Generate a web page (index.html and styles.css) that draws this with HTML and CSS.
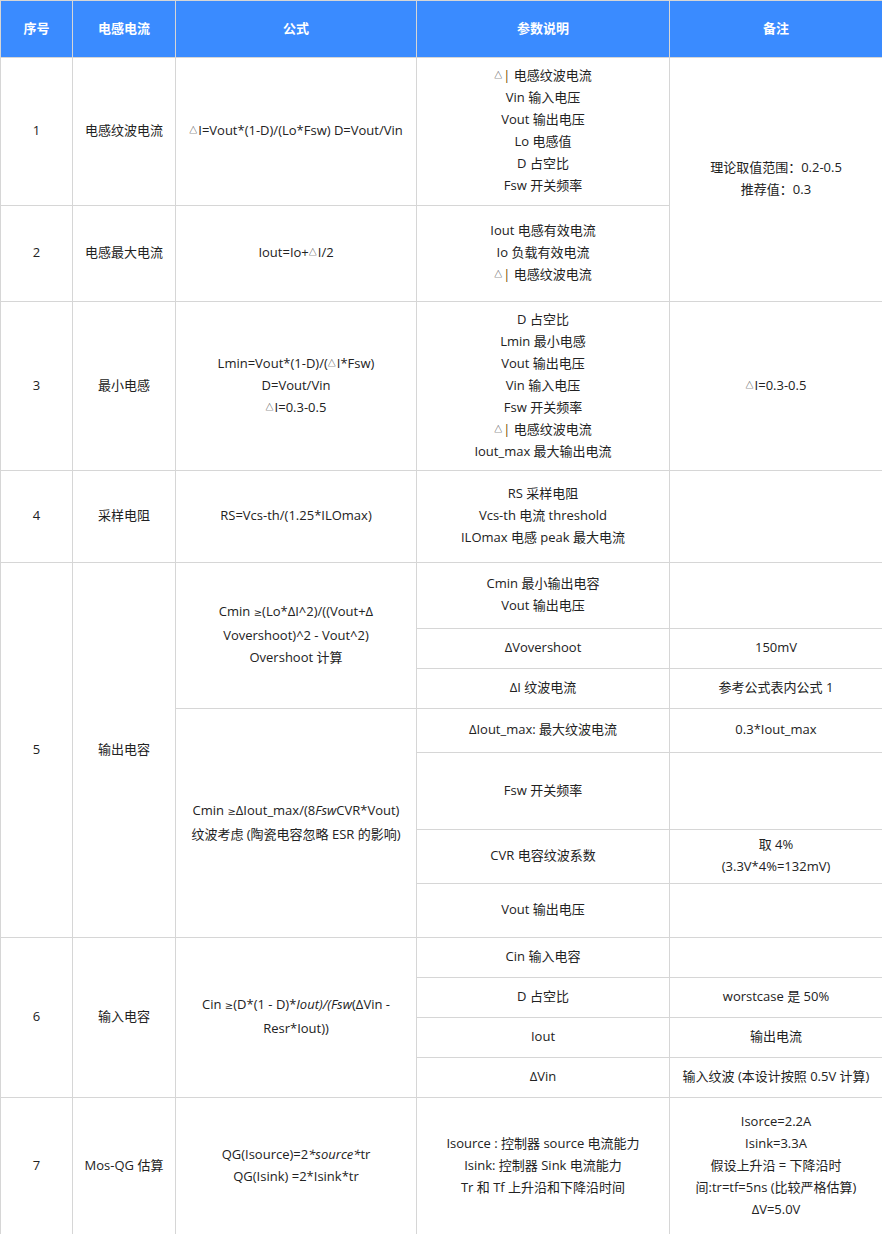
FILE: index.html
```html
<!DOCTYPE html>
<html lang="zh-CN">
<head>
<meta charset="utf-8">
<title>电感电容计算表</title>
<link rel="stylesheet" href="styles.css">
</head>
<body>
<table class="sheet">
  <colgroup>
    <col class="c1"><col class="c2"><col class="c3"><col class="c4"><col class="c5">
  </colgroup>
  <thead>
    <tr class="h-head">
      <th>序号</th><th>电感电流</th><th>公式</th><th>参数说明</th><th>备注</th>
    </tr>
  </thead>
  <tbody>
    <tr class="h148">
      <td>1</td>
      <td>电感纹波电流</td>
      <td><span class="tri">△</span>I=Vout*(1-D)/(Lo*Fsw) D=Vout/Vin</td>
      <td><span class="tri">△</span><span class="bar">|</span> 电感纹波电流<br>Vin 输入电压<br>Vout 输出电压<br>Lo 电感值<br>D 占空比<br>Fsw 开关频率</td>
      <td rowspan="2">理论取值范围：0.2-0.5<br>推荐值：0.3</td>
    </tr>
    <tr class="h96">
      <td>2</td>
      <td>电感最大电流</td>
      <td>Iout=Io+<span class="tri">△</span>I/2</td>
      <td>Iout 电感有效电流<br>Io 负载有效电流<br><span class="tri">△</span><span class="bar">|</span> 电感纹波电流</td>
    </tr>
    <tr class="h169">
      <td>3</td>
      <td>最小电感</td>
      <td>Lmin=Vout*(1-D)/(<span class="tri">△</span>I*Fsw)<br>D=Vout/Vin<br><span class="tri">△</span>I=0.3-0.5</td>
      <td>D 占空比<br>Lmin 最小电感<br>Vout 输出电压<br>Vin 输入电压<br>Fsw 开关频率<br><span class="tri">△</span><span class="bar">|</span> 电感纹波电流<br>Iout_max 最大输出电流</td>
      <td><span class="tri">△</span>I=0.3-0.5</td>
    </tr>
    <tr class="h92">
      <td>4</td>
      <td>采样电阻</td>
      <td>RS=Vcs-th/(1.25*ILOmax)</td>
      <td>RS 采样电阻<br>Vcs-th 电流 threshold<br>ILOmax 电感 peak 最大电流</td>
      <td></td>
    </tr>
    <tr class="h66">
      <td rowspan="7">5</td>
      <td rowspan="7">输出电容</td>
      <td rowspan="3">Cmin <span class="ge">≥</span>(Lo*ΔI^2)/((Vout+Δ<br>Vovershoot)^2 - Vout^2)<br>Overshoot 计算</td>
      <td>Cmin 最小输出电容<br>Vout 输出电压</td>
      <td></td>
    </tr>
    <tr class="h40">
      <td>ΔVovershoot</td>
      <td>150mV</td>
    </tr>
    <tr class="h40">
      <td>ΔI 纹波电流</td>
      <td>参考公式表内公式 1</td>
    </tr>
    <tr class="h44">
      <td rowspan="4">Cmin <span class="ge">≥</span>ΔIout_max/(8<i>Fsw</i>CVR*Vout)<br>纹波考虑 (陶瓷电容忽略 ESR 的影响)</td>
      <td>ΔIout_max: 最大纹波电流</td>
      <td>0.3*Iout_max</td>
    </tr>
    <tr class="h77">
      <td>Fsw 开关频率</td>
      <td></td>
    </tr>
    <tr class="h54">
      <td>CVR 电容纹波系数</td>
      <td>取 4%<br>(3.3V*4%=132mV)</td>
    </tr>
    <tr class="h54">
      <td>Vout 输出电压</td>
      <td></td>
    </tr>
    <tr class="h40">
      <td rowspan="4">6</td>
      <td rowspan="4">输入电容</td>
      <td rowspan="4">Cin <span class="ge">≥</span>(D*(1 - D)*<i>Iout)/(Fsw</i>(ΔVin -<br>Resr*Iout))</td>
      <td>Cin 输入电容</td>
      <td></td>
    </tr>
    <tr class="h40">
      <td>D 占空比</td>
      <td>worstcase 是 50%</td>
    </tr>
    <tr class="h40">
      <td>Iout</td>
      <td>输出电流</td>
    </tr>
    <tr class="h40">
      <td>ΔVin</td>
      <td>输入纹波 (本设计按照 0.5V 计算)</td>
    </tr>
    <tr class="h137">
      <td>7</td>
      <td>Mos-QG 估算</td>
      <td>QG(Isource)=2<i>*source*</i>tr<br>QG(Isink) =2*Isink*tr</td>
      <td>Isource : 控制器 source 电流能力<br>Isink: 控制器 Sink 电流能力<br>Tr 和 Tf 上升沿和下降沿时间</td>
      <td>Isorce=2.2A<br>Isink=3.3A<br>假设上升沿 = 下降沿时<br>间:tr=tf=5ns (比较严格估算)<br>ΔV=5.0V</td>
    </tr>
  </tbody>
</table>
</body>
</html>
```

FILE: styles.css
```css
html, body {
  margin: 0;
  padding: 0;
  background: #ffffff;
}

body {
  font-family: "Open Sans", "Noto Sans CJK SC", sans-serif;
  font-size: 13px;
  color: #222222;
}

.sheet {
  width: 882px;
  border-collapse: collapse;
  table-layout: fixed;
}

.c1 { width: 72px; }
.c2 { width: 103px; }
.c3 { width: 241px; }
.c4 { width: 253px; }
.c5 { width: 213px; }

.sheet th,
.sheet td {
  border: 1px solid #d6d6d6;
  text-align: center;
  vertical-align: middle;
  padding: 0 4px 3px;
  line-height: 22px;
}

.sheet th {
  background: #3a8bff;
  color: #ffffff;
  font-weight: bold;
}

.tri {
  font-size: 8px;
  vertical-align: 2px;
  margin-right: 1px;
}

.ge {
  font-family: "DejaVu Sans", sans-serif;
  font-size: 10px;
}

.bar {
  color: #7a4a00;
}

.h-head { height: 57px; }
.h148 { height: 148px; }
.h96 { height: 96px; }
.h169 { height: 169px; }
.h92 { height: 92px; }
.h66 { height: 66px; }
.h40 { height: 40px; }
.h44 { height: 44px; }
.h77 { height: 77px; }
.h54 { height: 54px; }
.h137 { height: 137px; }
```
